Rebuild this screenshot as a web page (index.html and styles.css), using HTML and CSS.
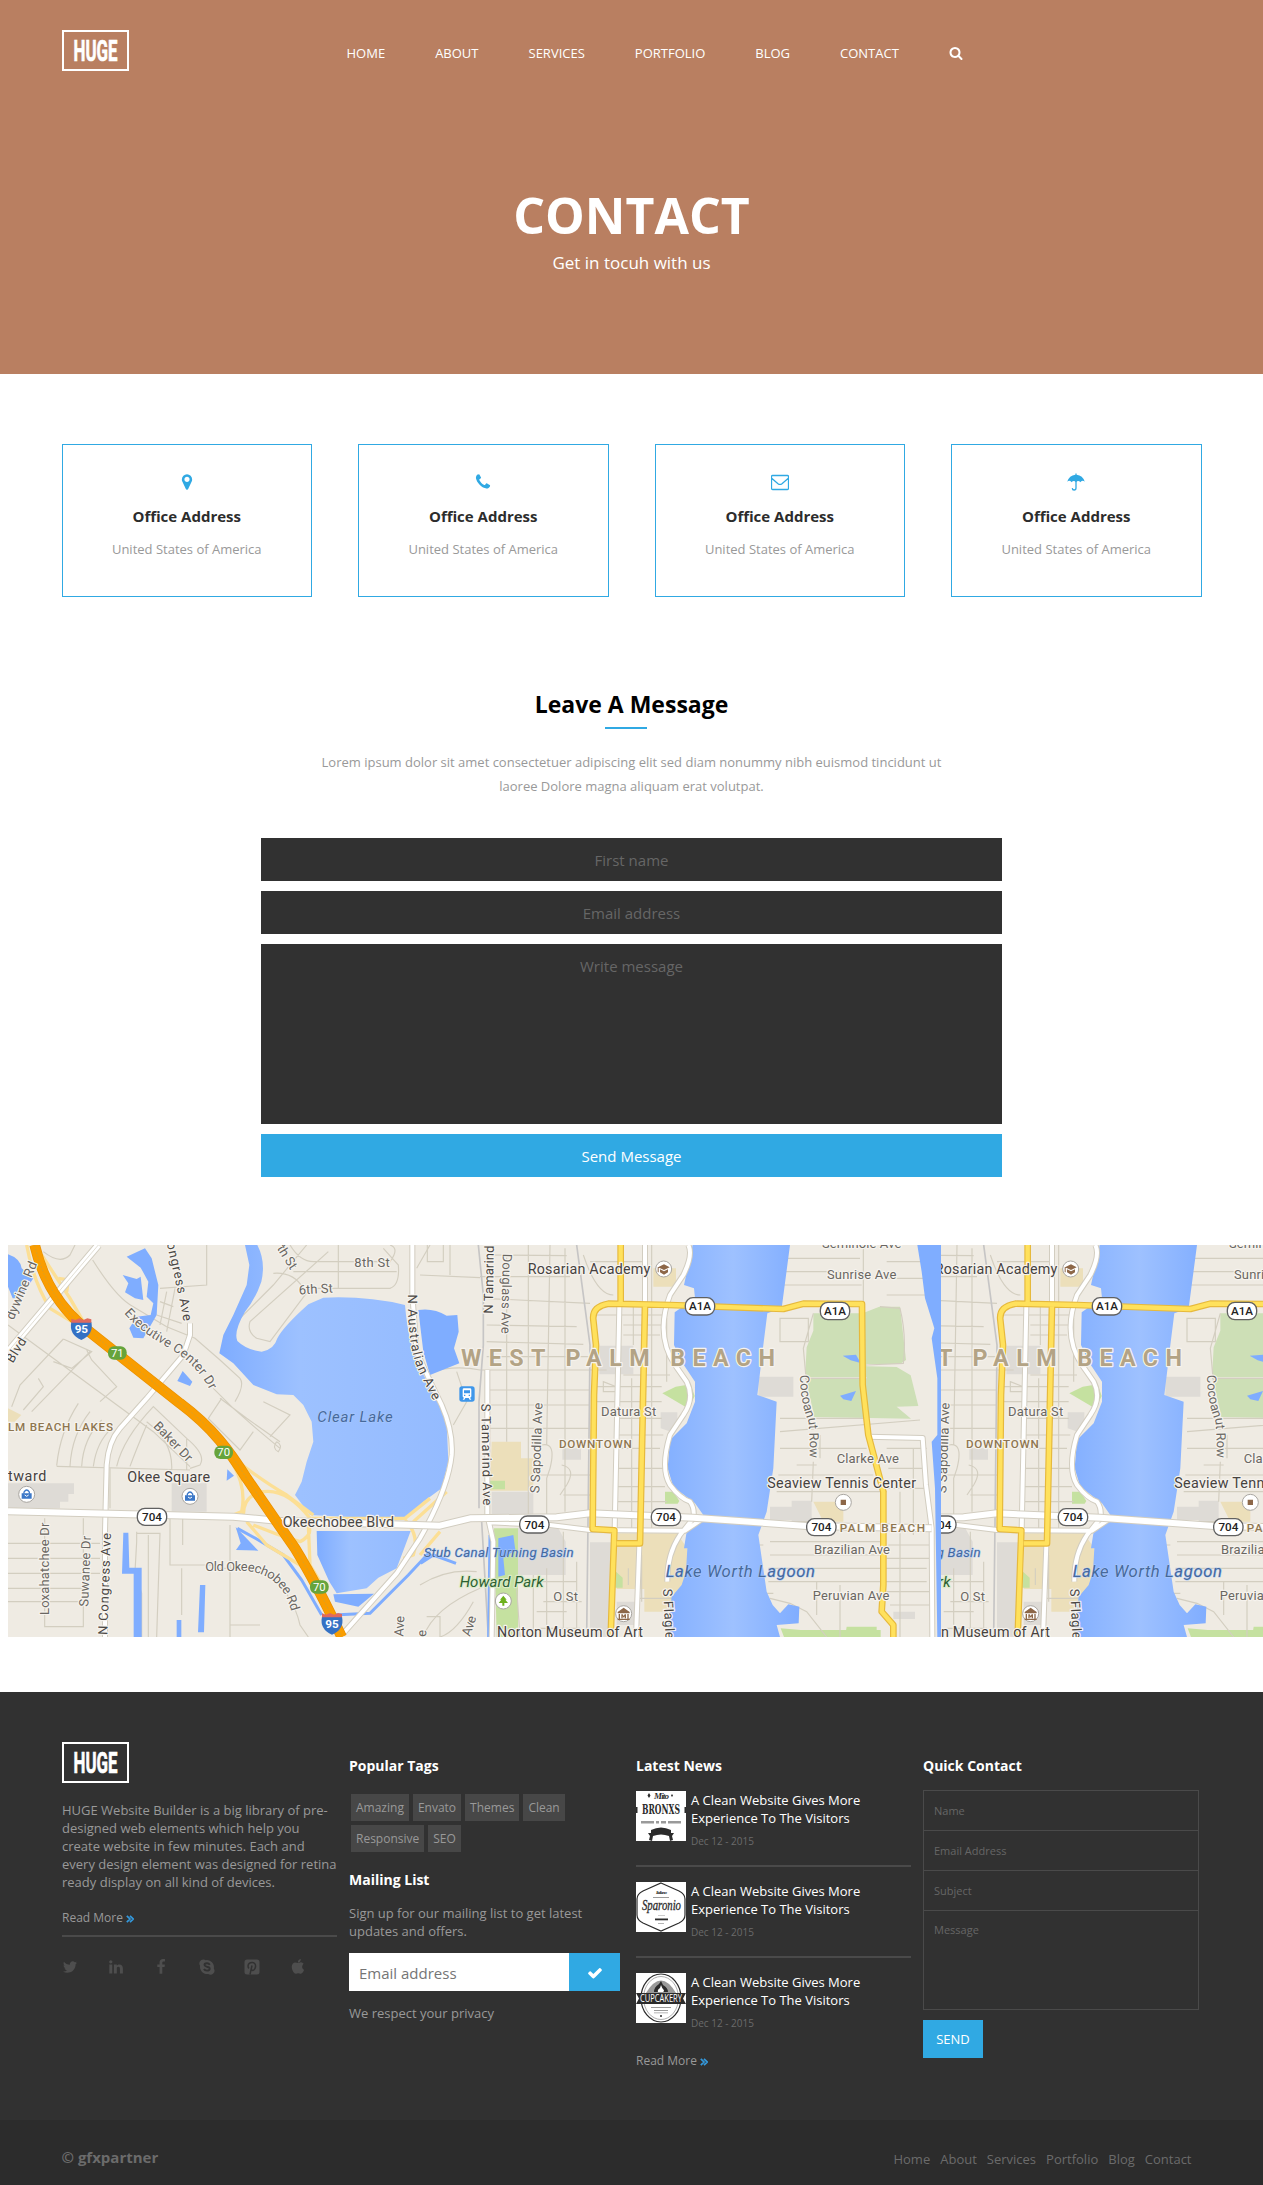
FILE: index.html
```html
<!DOCTYPE html>
<html lang="en">
<head>
<meta charset="utf-8">
<title>HUGE - Contact</title>
<link rel="stylesheet" href="styles.css">
</head>
<body>
<header class="hero">
  <div class="container hero-bar">
    <a class="logo"><svg width="67" height="41" viewBox="0 0 67 41"><rect class="logo-frame" x="1" y="1" width="65" height="39"/><text class="logo-text" x="11.500" y="31" textLength="44" lengthAdjust="spacingAndGlyphs">HUGE</text></svg></a>
    <nav class="main-nav">
      <a>HOME</a><a>ABOUT</a><a>SERVICES</a><a>PORTFOLIO</a><a>BLOG</a><a>CONTACT</a>
      <a class="search"><svg width="14" height="14" viewBox="0 0 1792 1792"><path d="M1216 832q0-185-131.500-316.500t-316.500-131.500-316.500 131.500-131.500 316.500 131.500 316.500 316.500 131.500 316.500-131.500 131.500-316.500zm512 832q0 52-38 90t-90 38q-54 0-90-38l-343-342q-179 124-399 124-143 0-273.500-55.500t-225-150-150-225-55.500-273.500 55.500-273.500 150-225 225-150 273.500-55.500 273.500 55.500 225 150 150 225 55.500 273.500q0 220-124 399l343 343q37 37 37 90z"/></svg></a>
    </nav>
  </div>
  <h1>CONTACT</h1>
  <p class="hero-sub">Get in tocuh with us</p>
</header>

<section class="container cards">
  <article class="card"><svg width="18" height="18" viewBox="0 0 1792 1792"><path d="M1152 640q0-106-75-181t-181-75-181 75-75 181 75 181 181 75 181-75 75-181zm256 0q0 109-33 179l-364 774q-16 33-47.500 52t-67.500 19-67.500-19-46.500-52l-365-774q-33-70-33-179 0-212 150-362t362-150 362 150 150 362z"/></svg><h3>Office Address</h3><p>United States of America</p></article>
  <article class="card"><svg width="18" height="18" viewBox="0 0 1792 1792"><path d="M1600 1240q0 27-10 70.500t-21 68.500q-21 50-122 106-94 51-186 51-27 0-53-3.500t-57.500-12.500-47-14.500-55.500-20.500-49-18q-98-35-175-83-127-79-264-216t-216-264q-48-77-83-175-3-9-18-49t-20.500-55.500-14.500-47-12.500-57.500-3.500-53q0-92 51-186 56-101 106-122 25-11 68.500-21t70.500-10q14 0 21 3 18 6 53 76 11 19 30 54t35 63.500 31 53.500q3 4 17.500 25t21.500 35.500 7 28.500q0 20-28.500 50t-62 55-62 53-28.500 46q0 9 5 22.500t8.500 20.500 14 24 11.500 19q76 137 174 235t235 174q2 1 19 11.500t24 14 20.500 8.500 22.500 5q18 0 46-28.500t53-62 55-62 50-28.500q14 0 28.500 7t35.500 21.500 25 17.500q25 15 53.500 31t63.500 35 54 30q70 35 76 53 3 7 3 21z"/></svg><h3>Office Address</h3><p>United States of America</p></article>
  <article class="card"><svg width="18" height="18" viewBox="0 0 18 18"><path class="line-icon" d="M1.500 2.500h15q1 0 1 1v12q0 1-1 1h-15q-1 0-1-1v-12q0-1 1-1zM.7 5.200L7 10.700q2 1.500 4 0l6.300-5.500"/></svg><h3>Office Address</h3><p>United States of America</p></article>
  <article class="card"><svg width="18" height="18" viewBox="0 0 18 18"><path d="M8.400 1.800V.5h1.200v1.300Q15.700 2.400 17.800 8.800q-1.600-1.600-3-.9-.9.500-1.400 1.300Q11.300 6.900 9 9.200 6.700 6.900 4.600 9.200 4.100 8.400 3.200 7.900q-1.400-.7-3 .9Q2.300 2.400 8.400 1.800z"/><path class="line-icon" d="M9 8v7q0 2-1.900 2-1.700 0-1.800-1.900"/></svg><h3>Office Address</h3><p>United States of America</p></article>
</section>

<section class="message">
  <h2>Leave A Message</h2>
  <p class="intro">Lorem ipsum dolor sit amet consectetuer adipiscing elit sed diam nonummy nibh euismod tincidunt ut<br>laoree Dolore magna aliquam erat volutpat.</p>
  <form class="message-form">
    <input type="text" placeholder="First name">
    <input type="text" placeholder="Email address">
    <textarea placeholder="Write message"></textarea>
    <button type="button">Send Message</button>
  </form>
</section>

<section class="map">
<svg width="1255" height="392" viewBox="24 30 3765 1176">
<defs>
<linearGradient id="lake" x1="0" x2="1"><stop offset="0" stop-color="#7eacff"/><stop offset=".35" stop-color="#9dc1ff"/><stop offset="1" stop-color="#94bbff"/></linearGradient>
<linearGradient id="lagoon" x1="0" x2="1"><stop offset="0" stop-color="#84b0ff"/><stop offset=".5" stop-color="#9ec1ff"/><stop offset="1" stop-color="#80adff"/></linearGradient>
<clipPath id="tileA"><rect x="24" y="30" width="2799" height="1176"/></clipPath>
<clipPath id="tileB"><rect x="2823" y="30" width="966" height="1176"/></clipPath>
<path id="curveExec" d="M372 235Q420 290 500 335Q590 385 632 470L650 510"/>
<path id="curveOld" d="M616 1008L740 1008Q850 1020 875 1135L880 1160"/>
<path id="curveAus" d="M1224 178Q1222 320 1250 395Q1275 450 1302 500L1320 530"/>
<path id="curveCong" d="M500 25Q530 150 553 270L556 300"/>
<path id="curveCocoa" d="M2400 420Q2400 500 2425 560Q2432 620 2428 690"/>
<g id="city">
  <rect x="0" y="0" width="3000" height="1250" fill="#efebe3"/>
  <!-- built-up blocks -->
  <path fill="#dedbd6" d="M24 745H222V777H205V800H180V820H24zM515 745h105v85h-105zM1475 770h125v68h-125zM1550 880h125l22 40v100h-147zM1770 922h65v284h-65zM1798 332h102v86h-102zM1687 640h56v34h-56zM2275 425h105v60h-105zM1982 532h50v50l-20 8-30-10zM2375 797h60v62h-60zM2310 815h65v40h-65zM1850 1100h60v70h-60zM2680 1130h65v22h-65z"/>
  <path fill="#ecdfba" d="M1475 620h88v50h37v97h-130zM1960 100h68v55h-68zM1850 895h180l32 45v100l-32 45-15 45h-82v-68h-83zM2440 800h90v60h-60zM24 520l40 20-20 20h-20z"/>
  <!-- parks -->
  <path fill="#cddfb6" d="M2440 235h148l50-20h62l18 160-18 12h-100v40h-185l5-90 20-50zM2418 432h182v-38l90 2 42 25 23 92-65 2 43 36-290-5z"/>
  <path fill="#c5e1a0" d="M1987 475l40-20 45-7 12 35-18 38zM1482 880h72v326h-64zM1995 770h25l18 28-5 8h-38zM1848 1010l20 18v30h-22zM1467 737h48v26h-48zM2342 1180l60 5h240v21h-290zM2540 1175h90v31h-95z"/>
  <!-- minor streets -->
  <g class="street">
    <path d="M278 75Q350 190 400 215L500 275L585 310L660 375L720 430Q735 450 705 500M130 50Q180 90 210 60L225 30M24 270L460 590L570 695M190 312L275 350L215 400L160 380M190 312L60 450L35 515M270 350L95 530M260 345L275 375L350 455L300 500M115 430L130 455L70 525M170 692Q180 590 235 505M210 694Q215 600 270 530M245 694Q250 610 305 555M280 694Q290 620 335 580M170 694L570 705M350 694Q370 610 460 515L560 610Q620 660 600 690L570 700M390 694Q410 640 440 570M440 560Q520 620 515 705M560 612V705M330 700V820M660 490L740 550L840 620M640 460L700 520L780 590L840 640M665 490L625 550L720 645L760 590M830 620Q850 630 835 650Q815 640 830 620M790 500L870 540L810 605"/>
    <path d="M24 925H300M24 970H300M24 1015H300M24 1060H250M24 1100H250M134 850V1175H250V850M24 970M410 890V920L405 1010L425 1075V1206M410 895H480L470 1206M445 900V1206M510 845V990H640M548 850V930M690 870V1206M545 1000V1140M690 1170H780"/>
    <path d="M620 30V150L480 160M480 200L520 215M470 240L545 265M500 170L480 270M525 160L500 290M640 1000H720M800 1010Q880 1080 900 1170L925 1206M870 30Q900 80 940 80H1170Q1200 40 1170 30M920 30L820 150L710 260M820 115Q880 110 910 160H1170Q1200 150 1195 90L1150 40M1015 30V160M985 50L750 260Q740 290 770 310L810 320L930 160M880 110H1190M1250 100L1290 30M1280 1145H1320V1206"/>
    <path d="M1282 30V80H1330V30M1350 30V120M1260 120L1440 128M1290 410Q1370 390 1440 405H1820M1370 410L1400 500L1360 570M1460 60L1700 62M1440 125H1710M1450 190L1770 205M1460 270L1730 275M1460 320L1750 328M1460 365H1780M1460 465H1770M1460 510H1770M1460 580H1770M1600 720H1770M1690 780H1770M1585 30V840M1650 30L1640 630M1520 60V620M1695 40V830M1625 630Q1670 620 1650 700L1640 730V840M1685 690Q1730 700 1700 750L1680 780"/>
    <path d="M1770 80H1930M1770 240L2000 240M1870 270H1985M1870 300H1980M1870 420H2010M1780 455H1985M1780 500H1985M1860 550H1985M1850 600H1990M1850 640H1980M1850 700H1990M1850 755H1995M1850 800H2000M1955 30V880M1900 215V330M1895 430V880M1860 460L1810 440V470H1850M2000 250V440M1750 60Q1790 180 1840 180"/>
    <path d="M1605 1040H1730M1630 1100H1745M1610 1130H1700M1620 1180H1740M1690 890V1206M1640 1000V1206M1730 980V1206M1600 1020V1206M1550 1060L1560 1206M1440 1060Q1300 1120 1270 1206M1420 1100Q1370 1190 1320 1206M1260 1050Q1340 1000 1430 1010M1920 1090H2020M1885 1000V1050M1925 960V1100"/>
    <path d="M2360 70H2580M2350 110H2585M2345 150H2585M2340 250h85v70h-85zM2440 235L2410 340L2420 450M2415 430H2600M2600 390L2710 385Q2720 300 2700 220L2640 215M2340 550H2600M2340 590L2760 555M2340 640H2600M2390 690H2450M2335 720H2620M2440 680L2435 800M2460 600V670M2330 770H2660M2330 860H2440M2310 920H2650M2310 960H2640M2305 1000H2780M2305 1040H2780M2310 1090L2370 1105L2420 1130L2480 1206M2660 640H2780M2665 700H2780M2665 760H2785M2665 930H2790M2660 970H2790M2660 1070H2790M2670 1110H2790M2700 770V1206M2740 640V900M2520 1050V1206M2590 30V200M2660 80H2770M2660 130H2780M2660 180H2790M2450 1040V1140"/>
    <path d="M2085 455L2135 480M2075 530L2145 553M2060 610L2100 632M2225 930H2290M2240 1075H2320"/>
  </g>
  <path class="rail" d="M1435 30L1450 180V330L1437 500V820M1730 30L1770 330L1768 520L1760 1206M1445 860L1465 1206"/>
  <!-- water -->
  <g fill="#7fadff">
    <path d="M24 58Q60 70 65 100L100 130L60 190H38L24 155z"/>
    <path d="M435 40L380 65L422 98L445 140L440 185L460 205L452 240L410 245L388 280L400 308L430 310L470 240L475 150L455 70zM368 120L410 132L422 125L430 195L405 190L375 172L385 145z"/>
    <path d="M548 408L577 440L570 453L532 438zM682 703L702 722L680 737zM707 876L775 947L708 945L722 925zM370 893h15l3 105h37v208h-24v-190h-35zM600 1050h16l-4 142h-18zM530 1155h14v51h-14z"/>
    <path d="M1255 225Q1300 218 1340 242L1372 240L1376 290L1362 340L1378 385L1290 420L1270 350z"/>
    <path d="M1000 1078L1122 1076L1075 1115L1005 1100zM1495 910L1540 900L1546 945L1510 970L1515 1020L1495 1025z"/>
    <path d="M2528 362l40-3 14 25-30-8zM2520 482l48-14-14 30-24-5z"/>
    <path d="M2752 30L2765 110L2775 190L2803 280L2795 310L2812 430V600L2795 620L2805 760L2812 1206H2823V30z"/>
  </g>
  <path class="canal" d="M712 880L770 912L850 960L905 1035L965 1140M1290 950L1225 1020L1110 1135L1000 1140M1262 985L1300 960L1368 985M1470 900L1466 1206"/>
  <path fill="url(#lake)" d="M735 30H772Q798 80 784 140Q765 195 735 230Q700 290 712 318Q740 345 785 350Q822 345 832 310Q850 275 925 208L970 188Q1100 182 1215 210Q1225 330 1260 400L1300 475L1340 560L1345 680L1325 760L1270 800L1215 855L930 840L885 780L905 740L920 680L940 620L935 560L910 510L880 480L830 478L760 450L700 385L658 355L670 300L700 240L740 150L748 90z"/>
  <path fill="url(#lake)" d="M950 888H1232L1205 960L1190 1000L1135 1028L1100 1060L1010 1075L988 1040L952 960z"/>
  <path fill="url(#lagoon)" d="M2078 30L2052 150L2082 160L2085 190L2024 232L2022 330L2045 380L2085 440V500L2060 565L2010 615L2003 700L2020 755L2085 805L2110 840L2060 890L2052 940H2062L2058 1010L2045 1050L2015 1085L2000 1206H2340L2330 1170L2396 1165L2398 1115L2365 1108L2340 1135L2318 1110L2300 1070L2275 900L2300 830L2320 700L2330 500L2272 480L2290 330L2302 235L2345 220L2370 30z"/>
  <!-- ramps -->
  <path class="ramp" d="M80 30Q100 140 150 220L240 275M125 60L210 190L250 260M175 130L205 135L200 170M700 670Q790 740 860 780L940 840M700 690Q740 760 725 830L700 840M730 840Q730 780 790 770Q860 760 930 850L1215 850L1290 790M740 860L800 930L900 990L955 1050M760 870Q830 900 900 920Q940 900 925 870L930 990L960 1040M1215 855Q1260 900 1240 960L1210 970M1260 960L1320 890M1240 860L1340 770"/>
  <!-- arterial streets -->
  <path class="road-case" d="M315 1206V890L320 690Q325 620 360 580L440 490L550 360L570 300V265M1237 30V180L1250 350Q1290 440 1325 510Q1360 590 1355 660Q1345 760 1260 910L1190 1015L1030 1195M1462 405V840L1480 920L1475 1206M1935 30V205M1858 215L1844 885M1918 930L1908 1206M2065 30Q2080 60 2050 120L2010 180Q1965 300 2025 390L2060 440Q2085 490 2050 540L2010 600Q1980 700 2010 750Q2040 790 2070 800Q2085 820 2080 850L2040 900Q2000 960 2002 1040M1470 862L1650 870L1770 885L2055 887L2110 850M2605 605L2768 609L2778 750L2795 880L2797 1206"/>
  <path class="road-white" d="M315 1206V890L320 690Q325 620 360 580L440 490L550 360L570 300V265M1237 30V180L1250 350Q1290 440 1325 510Q1360 590 1355 660Q1345 760 1260 910L1190 1015L1030 1195M1462 405V840L1480 920L1475 1206M1935 30V205M1858 215L1844 885M1918 930L1908 1206M2065 30Q2080 60 2050 120L2010 180Q1965 300 2025 390L2060 440Q2085 490 2050 540L2010 600Q1980 700 2010 750Q2040 790 2070 800Q2085 820 2080 850L2040 900Q2000 960 2002 1040M1470 862L1650 870L1770 885L2055 887L2110 850M2605 605L2768 609L2778 750L2795 880L2797 1206"/>
  <path class="blvd-case" d="M24 350L295 30M24 829L700 845L830 857L1320 872L1410 850L1670 847L1770 835L2080 848L2420 873L2795 880"/>
  <path class="blvd" d="M24 350L295 30M24 829L700 845L830 857L1320 872L1410 850L1670 847L1770 835L2080 848L2420 873L2795 880"/>
  <path class="blvd-center" d="M24 350L295 30"/>
  <path class="yellow-case" d="M1862 30V205M2010 210L1825 206Q1775 215 1780 255L1788 330L1782 480L1778 882L1843 886L1832 1206M1935 208L1920 925H1850M2010 210L2350 222L2410 206L2586 207L2588 450L2605 600L2650 770V1050L2645 1130L2680 1170V1206"/>
  <path class="yellow" d="M1862 30V205M2010 210L1825 206Q1775 215 1780 255L1788 330L1782 480L1778 882L1843 886L1832 1206M1935 208L1920 925H1850M2010 210L2350 222L2410 206L2586 207L2588 450L2605 600L2650 770V1050L2645 1130L2680 1170V1206"/>
  <path class="freeway-case" d="M104 30C130 140 180 220 262 285L540 505C640 580 690 650 740 730L885 940C940 1030 980 1110 1025 1206"/>
  <path class="freeway" d="M104 30C130 140 180 220 262 285L540 505C640 580 690 650 740 730L885 940C940 1030 980 1110 1025 1206"/>
  <path class="freeway-center" d="M104 30C130 140 180 220 262 285L540 505C640 580 690 650 740 730L885 940C940 1030 980 1110 1025 1206"/>
  <!-- street names -->
  <g class="name">
    <text x="1063" y="95" textLength="106">8th St</text>
    <text x="897" y="178" textLength="102" transform="rotate(-3 900 178)">6th St</text>
    <text transform="translate(830 40) rotate(58)" textLength="78">th St</text>
    <text transform="translate(46 243) rotate(-67)" x="-15" textLength="185">dywine Rd</text>
    <text><textPath href="#curveExec" textLength="350">Executive Center Dr</textPath></text>
    <text transform="translate(458 575) rotate(46)" textLength="150">Baker Dr</text>
    <text><textPath href="#curveOld" textLength="318">Old Okeechobee Rd</textPath></text>
    <text transform="translate(148 1140) rotate(-90)" textLength="277">Loxahatchee Dr</text>
    <text transform="translate(265 1115) rotate(-88)" textLength="212">Suwanee Dr</text>
    <text transform="translate(1210 1205) rotate(-87)" textLength="62">Ave</text>
    <text transform="translate(1278 1206) rotate(-87)">e</text>
    <text transform="translate(1410 1206) rotate(-72)" textLength="62">Ave</text>
    <text transform="translate(1478 236) rotate(-89)" class="name-strong" textLength="204">N Tamarind</text>
    <text transform="translate(1508 56) rotate(91)" textLength="240">Douglass Ave</text>
    <text transform="translate(1618 775) rotate(-88)" textLength="272">S Sapodilla Ave</text>
    <text x="1803" y="542" textLength="166">Datura St</text>
    <text><textPath href="#curveCocoa" textLength="252">Cocoanut Row</textPath></text>
    <text x="1660" y="1098" textLength="74">O St</text>
    <text x="2466" y="38" textLength="238">Seminole Ave</text>
    <text x="2481" y="133" textLength="208">Sunrise Ave</text>
    <text x="2510" y="683" textLength="187">Clarke Ave</text>
    <text x="2442" y="956" textLength="228">Brazilian Ave</text>
    <text x="2438" y="1096" textLength="230">Peruvian Ave</text>
  </g>
  <g class="name name-strong">
    <text><textPath href="#curveCong" textLength="240">ongress Ave</textPath></text>
    <text transform="translate(38 386) rotate(-58)" textLength="80">Blvd</text>
    <text transform="translate(322 1200) rotate(-88)" textLength="306">N Congress Ave</text>
    <text x="848" y="876" textLength="334" class="big">Okeechobee Blvd</text>
    <text><textPath href="#curveAus" textLength="334">N Australian Ave</textPath></text>
    <text transform="translate(1444 506) rotate(89)" textLength="305">S Tamarind Ave</text>
    <text transform="translate(1989 1062) rotate(87)" textLength="165">S Flagler</text>
  </g>
  <g class="place">
    <text x="24" y="738" textLength="115">tward</text><text x="382" y="741" textLength="248">Okee Square</text>
    <text x="1583" y="118" textLength="368">Rosarian Academy</text>
    <text x="2302" y="760" textLength="446">Seaview Tennis Center</text>
    <text x="1491" y="1206" textLength="438">Norton Museum of Art</text>
  </g>
  <g class="area">
    <text x="24" y="588" textLength="315">LM BEACH LAKES</text><text x="1677" y="640" textLength="218">DOWNTOWN</text><text x="2519" y="891" textLength="256">PALM BEACH</text>
  </g>
  <text class="city-name" x="1383" y="394" textLength="942">WEST PALM BEACH</text>
  <g class="water-name">
    <text x="952" y="561" textLength="226">Clear Lake</text><text x="1271" y="965" textLength="450" class="small">Stub Canal Turning Basin</text><text x="1997" y="1026" textLength="448" class="large">Lake Worth Lagoon</text>
  </g>
  <text class="park-name" x="1379" y="1056" textLength="252">Howard Park</text>
  <!-- route markers -->
  <g class="shield">
    <g transform="translate(244 283)"><path fill="#3471c4" d="M-30-22H30Q38 15 0 32Q-38 15-30-22z"/><path fill="#df6a5f" d="M-30-20V-32L-18-28L-6-33L6-28L18-33L30-30V-20z"/><text y="12">95</text></g>
    <g transform="translate(996 1167)"><path fill="#3471c4" d="M-30-22H30Q38 15 0 32Q-38 15-30-22z"/><path fill="#df6a5f" d="M-30-20V-32L-18-28L-6-33L6-28L18-33L30-30V-20z"/><text y="12">95</text></g>
  </g>
  <g class="exit">
    <rect x="324" y="334" width="56" height="40" rx="18"/><text x="352" y="367">71</text>
    <rect x="643" y="632" width="56" height="40" rx="18"/><text x="671" y="664">70</text>
    <rect x="930" y="1036" width="56" height="40" rx="18"/><text x="958" y="1068">70</text>
  </g>
  <g class="route">
    <rect x="412" y="820" width="88" height="51" rx="23"/><text x="456" y="858">704</text>
    <rect x="1559" y="843" width="88" height="51" rx="23"/><text x="1603" y="881">704</text>
    <rect x="1954" y="821" width="88" height="51" rx="23"/><text x="1998" y="859">704</text>
    <rect x="2420" y="851" width="88" height="51" rx="23"/><text x="2464" y="889">704</text>
    <rect x="2056" y="188" width="88" height="52" rx="23"/><text x="2100" y="226">A1A</text>
    <rect x="2461" y="202" width="88" height="52" rx="23"/><text x="2505" y="240">A1A</text>
  </g>
  <!-- points of interest -->
  <g class="poi">
    <circle cx="80" cy="778" r="24"/><circle cx="570" cy="784" r="24"/><circle cx="1991" cy="102" r="24"/><circle cx="1510" cy="1098" r="24"/><circle cx="1871" cy="1136" r="24"/><circle cx="2530" cy="802" r="24"/>
  </g>
  <path fill="#3c78c8" d="M65 775h30v16H65zM555 781h30v16h-30z"/><path class="bag" d="M72 776v-5q8-12 16 0v5M562 782v-5q8-12 16 0v5"/><path class="smile" d="M74 780q6 8 12 0M564 786q6 8 12 0"/>
  <path fill="#8d6748" d="M1974 97l18-9 17 9-17 8zM1980 103l12 6 12-6v9l-12 7-12-7zM1973 97h3v15h-3zM2522 794h16v16h-16zM1853 1131l18-13 18 13v4h-36zM1856 1137h4v14h-4zM1882 1137h4v14h-4zM1853 1151h36v4h-36zM1864 1138h4l3 5 3-5h4v12h-4v-6l-3 4-3-4v6h-4z"/>
  <path fill="#6eb11e" d="M1510 1082l10 12h-4l8 10h-11v8h-6v-8h-11l8-10h-4z"/>
  <rect x="1378" y="454" width="46" height="46" rx="8" fill="#3f97ea"/><path fill="#fff" d="M1392 460h18q4 0 4 4v20q0 4-4 4l4 6h-5l-3-5h-10l-3 5h-5l4-6q-4 0-4-4v-20q0-4 4-4z"/><path fill="#3f97ea" d="M1392 466h18v9h-18zM1392 479h4v4h-4zM1406 479h4v4h-4z"/>
</g>
</defs>
<g clip-path="url(#tileA)"><use href="#city"/></g>
<g clip-path="url(#tileB)"><use href="#city" x="1221"/></g>
</svg>
</section>

<footer class="footer">
  <div class="container footer-grid">
    <section class="about">
      <a class="logo"><svg width="67" height="41" viewBox="0 0 67 41"><rect class="logo-frame" x="1" y="1" width="65" height="39"/><text class="logo-text" x="11.500" y="31" textLength="44" lengthAdjust="spacingAndGlyphs">HUGE</text></svg></a>
      <p>HUGE Website Builder is a big library of pre-<br>designed web elements which help you<br>create website in few minutes. Each and<br>every design element was designed for retina<br>ready display on all kind of devices.</p>
      <a class="more">Read More<svg width="8" height="8" viewBox="0 0 8 8"><path d="M.8.800L4 4 .8 7.200M4 .8L7.200 4 4 7.200"/></svg></a>
      <div class="social">
        <svg viewBox="0 0 1792 1792"><path d="M1684 408q-67 98-162 167 1 14 1 42 0 130-38 259.500t-115.500 248.500-184.500 210.500-258 146-323 54.500q-271 0-496-145 35 4 78 4 225 0 401-138-105-2-188-64.500t-114-159.500q33 5 61 5 43 0 85-11-112-23-185.500-111.500t-73.500-205.500v-4q68 38 146 41-66-44-105-115t-39-154q0-88 44-163 121 149 294.500 238.500t371.500 99.500q-8-38-8-74 0-134 94.500-228.500t228.500-94.500q140 0 236 102 109-21 205-78-37 115-142 178 93-10 186-50z"/></svg>
        <svg viewBox="0 0 1792 1792"><path d="M477 625v991h-330v-991h330zm21-306q1 73-50.500 122t-135.500 49h-2q-82 0-132-49t-50-122q0-74 51.500-122.500t134.500-48.500 133 48.500 51 122.500zm1166 729v568h-329v-530q0-105-40.500-164.500t-126.500-59.500q-63 0-105.500 34.500t-63.500 85.500q-11 30-11 81v553h-329q2-399 2-647t-1-296l-1-48h329v144h-2q20-32 41-56t56.500-52 87-43.500 114.500-15.500q171 0 275 113.500t104 332.500z"/></svg>
        <svg viewBox="0 0 1792 1792"><path d="M1343 12v264h-157q-86 0-116 36t-30 108v189h293l-39 296h-254v759h-306v-759h-255v-296h255v-218q0-186 104-288.500t277-102.500q147 0 228 12z"/></svg>
        <svg viewBox="0 0 16 16"><path d="M4.500.500a4 4 0 0 1 2.300.700 7 7 0 0 1 8 8.200 4 4 0 0 1-5.600 5.500A7 7 0 0 1 1.100 6.800 4 4 0 0 1 4.500.500z"/><path class="cut" d="M10.800 5.700Q9.800 4.200 7.800 4.300 5.400 4.500 5.500 6q.1 1.200 2.500 1.700 2.800.500 2.700 2.200-.2 1.700-2.800 1.700-2.100 0-3-1.600"/></svg>
        <svg viewBox="0 0 16 16"><path d="M3 .500h10a2.500 2.500 0 0 1 2.500 2.500v10a2.500 2.500 0 0 1-2.500 2.500H3A2.500 2.500 0 0 1 .5 13V3A2.500 2.500 0 0 1 3 .500z"/><path class="cut thin" d="M6 15.500l2-9M7 11q3.500 1.500 4.500-3Q12 4 8.300 3.600 4.500 3.500 4 7q0 1.500 1 2.300"/></svg>
        <svg viewBox="0 0 1792 1792"><path d="M1585 1215q-39 125-123 250-129 196-257 196-49 0-140-32-86-32-151-32-61 0-142 33-81 34-132 34-152 0-301-259-147-261-147-503 0-228 113-374 113-144 284-144 72 0 177 30 104 30 138 30 45 0 143-34 102-34 173-34 119 0 213 65 52 36 104 100-79 67-114 118-65 94-65 207 0 124 69 223t158 126zm-376-1173q0 61-29 136-30 75-93 138-54 54-108 72-37 11-104 17 3-149 78-257 74-107 250-148 1 3 2.500 11t2.500 11q0 4 .5 10t.5 10z"/></svg>
      </div>
    </section>
    <section class="col">
      <h4>Popular Tags</h4>
      <div class="tags"><a>Amazing</a><a>Envato</a><a>Themes</a><a>Clean</a><a>Responsive</a><a>SEO</a></div>
      <h4 class="mailing">Mailing List</h4>
      <p class="signup">Sign up for our mailing list to get latest<br>updates and offers.</p>
      <form class="subscribe"><input type="text" placeholder="Email address"><button type="button"><svg width="16" height="16" viewBox="0 0 1792 1792"><path d="M1671 566q0 40-28 68l-724 724-136 136q-28 28-68 28t-68-28l-136-136-362-362q-28-28-28-68t28-68l136-136q28-28 68-28t68 28l294 295 656-657q28-28 68-28t68 28l136 136q28 28 28 68z"/></svg></button></form>
      <p class="privacy">We respect your privacy</p>
    </section>
    <section class="col news">
      <h4>Latest News</h4>
      <article><svg class="thumb" viewBox="0 0 50 50"><text class="script" x="18" y="8" font-size="9" textLength="15">Mito</text><path class="ink" d="M13 2l1.500 2.500L13 7l-1.500-2.500zM36 3l1 1.500L36 6l-1-1.500zM0 16h1.500v6H0zM48.500 16H50v6h-1.500z"/><text class="slab" x="6" y="23" font-size="13" textLength="38" lengthAdjust="spacingAndGlyphs">BRONXS</text><path class="gray" d="M5 30h13v2.500H5zM32 30h13v2.500H32zM20 30h3v2.500h-3zM25 30h5v2.500h-5z"/><path class="ink" d="M15 39q10-5 20 0v3l3 0-2 3 1 4-3 1-1-5q-8-3-16 0l-1 5-3-1 1-4-2-3h3z"/></svg><div><h5>A Clean Website Gives More<br>Experience To The Visitors</h5><time>Dec 12 - 2015</time></div></article>
      <article><svg class="thumb" viewBox="0 0 50 50"><path class="outline" d="M25 1L43 9Q49 12 49 17V33Q49 38 43 41L25 49L7 41Q1 38 1 33V17Q1 12 7 9z"/><text class="script" x="20" y="12" font-size="5" textLength="11">Italiano</text><path class="gray" d="M17 15h16v1H17zM22 33h7v.6h-7zM22 41h6v.7h-6z"/><text class="script light" x="6" y="28" font-size="14" textLength="39" lengthAdjust="spacingAndGlyphs">Sparonio</text><path class="ink" d="M19 36.500h13v1.800H19z"/></svg><div><h5>A Clean Website Gives More<br>Experience To The Visitors</h5><time>Dec 12 - 2015</time></div></article>
      <article><svg class="thumb" viewBox="0 0 50 50"><ellipse class="outline" cx="25" cy="25" rx="20" ry="24"/><ellipse class="hair" cx="25" cy="25" rx="17.500" ry="21.500"/><path class="gray" d="M10 20Q25-5 40 20z"/><path class="ink" d="M18 19q0-5 5-8l2-3 2 4q5 3 5 7zM0 20h50l-3 5.500 3 5.500H0l3-5.500z"/><path class="white" d="M22 19q-1-2 2-4l1-3q1 3 2 4 2 2 0 3z"/><text class="banner" x="4" y="29" font-size="10" textLength="42" lengthAdjust="spacingAndGlyphs">CUPCAKERY</text><path class="gray" d="M15 34h20v1H15zM18 37h14v1H18zM18 39.500h14v.7H18z"/><circle class="ink" cx="25" cy="43" r="1"/></svg><div><h5>A Clean Website Gives More<br>Experience To The Visitors</h5><time>Dec 12 - 2015</time></div></article>
      <a class="more">Read More<svg width="8" height="8" viewBox="0 0 8 8"><path d="M.8.800L4 4 .8 7.200M4 .8L7.200 4 4 7.200"/></svg></a>
    </section>
    <section class="col">
      <h4>Quick Contact</h4>
      <form class="quick"><input type="text" placeholder="Name"><input type="text" placeholder="Email Address"><input type="text" placeholder="Subject"><textarea placeholder="Message"></textarea></form>
      <button class="send" type="button">SEND</button>
    </section>
  </div>
  <div class="bottom"><div class="container bottom-row"><strong>© gfxpartner</strong><nav><a>Home</a><a>About</a><a>Services</a><a>Portfolio</a><a>Blog</a><a>Contact</a></nav></div></div>
</footer>
</body>
</html>
```
FILE: styles.css
```css
* { box-sizing: border-box; margin: 0; padding: 0; }
body { font: 13px/18px "Open Sans", "Noto Sans", sans-serif; color: #999; background: #fff; }
svg { display: block; }
input, textarea, button { font-family: inherit; border: 0; border-radius: 0; outline: 0; resize: none; display: block; }
.container { width: 1140px; margin: 0 auto; }

.logo { display: block; width: 67px; height: 41px; }
.logo-frame { fill: none; stroke: #fff; stroke-width: 2; }
.logo-text { fill: #fff; stroke: #fff; stroke-width: .7px; font: 700 29px "Roboto", sans-serif; }

.hero { height: 374px; background: #b97f61; color: #fff; text-align: center; padding-top: 30px; }
.hero-bar { display: flex; }
.main-nav { display: flex; gap: 50px; margin-left: 218px; padding-top: 13px; height: 41px; line-height: 20px; }
.main-nav svg { fill: #fff; }
.search { padding-top: 3px; }
.hero h1 { font-size: 50px; line-height: 60px; margin-top: 114px; }
.hero-sub { font-size: 17px; line-height: 24px; margin-top: 6px; }

.cards { display: grid; grid-template-columns: repeat(4, 1fr); gap: 46px; margin-top: 70px; }
.card { height: 153px; border: 1px solid #30a9e3; padding-top: 28px; text-align: center; }
.card svg { fill: #30a9e3; margin: 0 auto; }
.card .line-icon { fill: none; stroke: #30a9e3; stroke-width: 1.300; }
.card h3 { font-size: 15px; line-height: 20px; color: #2c2c2c; margin-top: 15px; }
.card p { line-height: 20px; margin-top: 13px; }

.message { text-align: center; margin-top: 92px; }
.message h2 { color: #000; font-size: 23px; line-height: 30px; }
.message h2::after { content: ""; display: block; width: 42px; height: 2px; background: #30a9e3; margin: 8px 0 0 605px; }
.intro { line-height: 24px; margin-top: 21px; }
.message-form { width: 741px; margin: 40px auto 0; display: grid; gap: 10px; }
.message-form input, .message-form textarea, .message-form button { width: 100%; height: 43px; background: #313131; text-align: center; font-size: 15px; line-height: 20px; }
.message-form textarea { height: 180px; padding-top: 12px; }
.message-form ::placeholder { color: #666; opacity: 1; }
.message-form button { background: #30a9e3; color: #fff; }

.map { margin: 68px 0 0 8px; overflow: hidden; }
.street { fill: none; stroke: #d3cec0; stroke-width: 3.500; }
.rail { fill: none; stroke: #c6c5c5; stroke-width: 5; }
.canal { fill: none; stroke: #7fadff; stroke-width: 9; }
.ramp { fill: none; stroke: #fcdf95; stroke-width: 10; stroke-linejoin: round; }
.road-case, .blvd-case, .road-white, .blvd, .yellow, .yellow-case, .freeway, .freeway-case { fill: none; stroke-linejoin: round; }
.road-case { stroke: #d2cdc0; stroke-width: 18; }
.road-white { stroke: #fff; stroke-width: 12; }
.blvd-case { stroke: #d2cdc0; stroke-width: 24; }
.blvd { stroke: #fff; stroke-width: 18; }
.blvd-center { stroke: #d2cdc0; stroke-width: 2; }
.yellow-case { stroke: #e6b93c; stroke-width: 20; }
.yellow { stroke: #ffe15c; stroke-width: 13; }
.freeway-case { stroke: #e89000; stroke-width: 32; }
.freeway { stroke: #f99d00; stroke-width: 28; }
.freeway-center { fill: none; stroke: #c9a03a; stroke-width: 2; stroke-dasharray: 6 5; }
.map text { font-family: "Roboto", sans-serif; }
.name text, .place text, .area text, .city-name, .water-name text, .park-name { paint-order: stroke; stroke: #f6f3ee; stroke-width: 7px; stroke-linejoin: round; }
.name { font-size: 39px; fill: #6a6762; }
.name-strong { fill: #4a4744; }
.big { font-size: 43px; }
.place { font-size: 43px; fill: #46423f; }
.area { font-size: 35px; font-weight: 500; fill: #8e7650; }
.city-name { font-size: 70px; font-weight: 700; fill: #b3a385; }
.water-name { font-size: 45px; font-style: italic; fill: #46699c; }
.water-name text { stroke: #aecbfa; stroke-width: 3px; }
.water-name .small { font-size: 40px; }
.water-name .large { font-size: 50px; }
.park-name { font-size: 45px; font-style: italic; fill: #2c5f33; stroke: #dcebc8; }
.shield text { fill: #fff; font-weight: 700; font-size: 35px; text-anchor: middle; }
.exit rect { fill: #66a43c; }
.exit text { fill: #fff; font-size: 34px; text-anchor: middle; }
.route rect { fill: #fff; stroke: #606060; stroke-width: 4; }
.route text { fill: #222; font-size: 35px; font-weight: 500; text-anchor: middle; }
.poi { fill: #fff; stroke: #a9a6a1; stroke-width: 3; }
.bag { fill: none; stroke: #3c78c8; stroke-width: 4; }
.smile { fill: none; stroke: #fff; stroke-width: 3; }

.footer { background: #313131; margin-top: 55px; }
.footer-grid { display: grid; grid-template-columns: repeat(4, 275px); gap: 12px; height: 428px; padding-top: 50px; width: 1139px; }
.about p { margin-top: 18px; white-space: nowrap; }
.more { display: flex; align-items: center; gap: 3px; font-size: 12px; line-height: 18px; }
.more svg { margin-top: 2px; fill: none; stroke: #3498db; stroke-width: 1.700; }
.about .more { margin-top: 18px; padding-bottom: 8px; border-bottom: 2px solid #4a4a4a; box-sizing: content-box; }
.social { display: flex; gap: 29.500px; margin-top: 22px; }
.social svg { width: 16px; height: 16px; fill: #4e4e4e; }
.social .cut { fill: none; stroke: #313131; stroke-width: 1.900; }
.social .thin { stroke-width: 1.500; }
.col { padding-top: 14px; }
.col h4 { color: #fff; font-size: 14px; line-height: 20px; }
.tags { display: flex; flex-wrap: wrap; gap: 4px; width: 230px; margin: 18px 0 0 2px; }
.tags a { background: #474747; font-size: 12px; line-height: 27px; padding: 0 5px; height: 27px; }
.col .mailing { margin-top: 18px; }
.signup { margin-top: 14px; }
.subscribe { display: flex; margin-top: 13px; width: 271px; }
.subscribe input { width: 220px; height: 38px; padding: 2px 10px 0; font-size: 15px; background: #fff; }
.subscribe ::placeholder { color: #757575; opacity: 1; }
.subscribe button { width: 51px; height: 38px; background: #30a9e3; padding: 2px 17px 0 18px; }
.subscribe svg { fill: #fff; }
.privacy { margin-top: 13px; }
.news article { display: flex; gap: 5px; height: 76px; margin-bottom: 15px; border-bottom: 2px solid #4a4a4a; }
.news h4 { margin-bottom: 15px; }
.news article:last-of-type { border: 0; margin-bottom: 3px; }
.thumb { width: 50px; height: 50px; background: #fff; }
.news h5 { font-size: 13px; line-height: 18px; font-weight: 400; color: #fff; }
.news time { display: block; font-size: 10px; line-height: 18px; margin-top: 5px; color: #6b6b6b; }
.ink { fill: #2b2b2b; }
.gray { fill: #9a9a9a; }
.white, .banner { fill: #fff; }
.outline { fill: none; stroke: #2b2b2b; stroke-width: 1.200; }
.hair { fill: none; stroke: #777; stroke-width: .600; }
.script { font-family: "Liberation Serif", serif; font-style: italic; font-weight: 700; fill: #2b2b2b; }
.light { font-weight: 400; stroke: #2b2b2b; stroke-width: .3px; }
.slab { font-family: "DejaVu Serif", serif; font-weight: 700; fill: #2b2b2b; }
.banner { font-family: "Open Sans", sans-serif; }
.quick { width: 276px; height: 220px; margin-top: 14px; border: 1px solid #4a4a4a; }
.quick input, .quick textarea { width: 100%; height: 40px; background: transparent; border-bottom: 1px solid #4a4a4a; padding: 0 10px; font-size: 11px; line-height: 15px; }
.quick textarea { height: 98px; border: 0; padding-top: 11px; }
.quick ::placeholder { color: #666; opacity: 1; }
.send { width: 60px; height: 38px; margin-top: 10px; background: #30a9e3; color: #fff; font-size: 13px; }
.bottom { height: 65px; background: #2c2c2c; color: #6b6b6b; }
.bottom-row { display: flex; justify-content: space-between; padding-top: 27px; }
.bottom-row strong { font-size: 15px; line-height: 20px; }
.bottom-row nav { display: flex; gap: 10px; padding: 3px 10px 0 0; }
```
